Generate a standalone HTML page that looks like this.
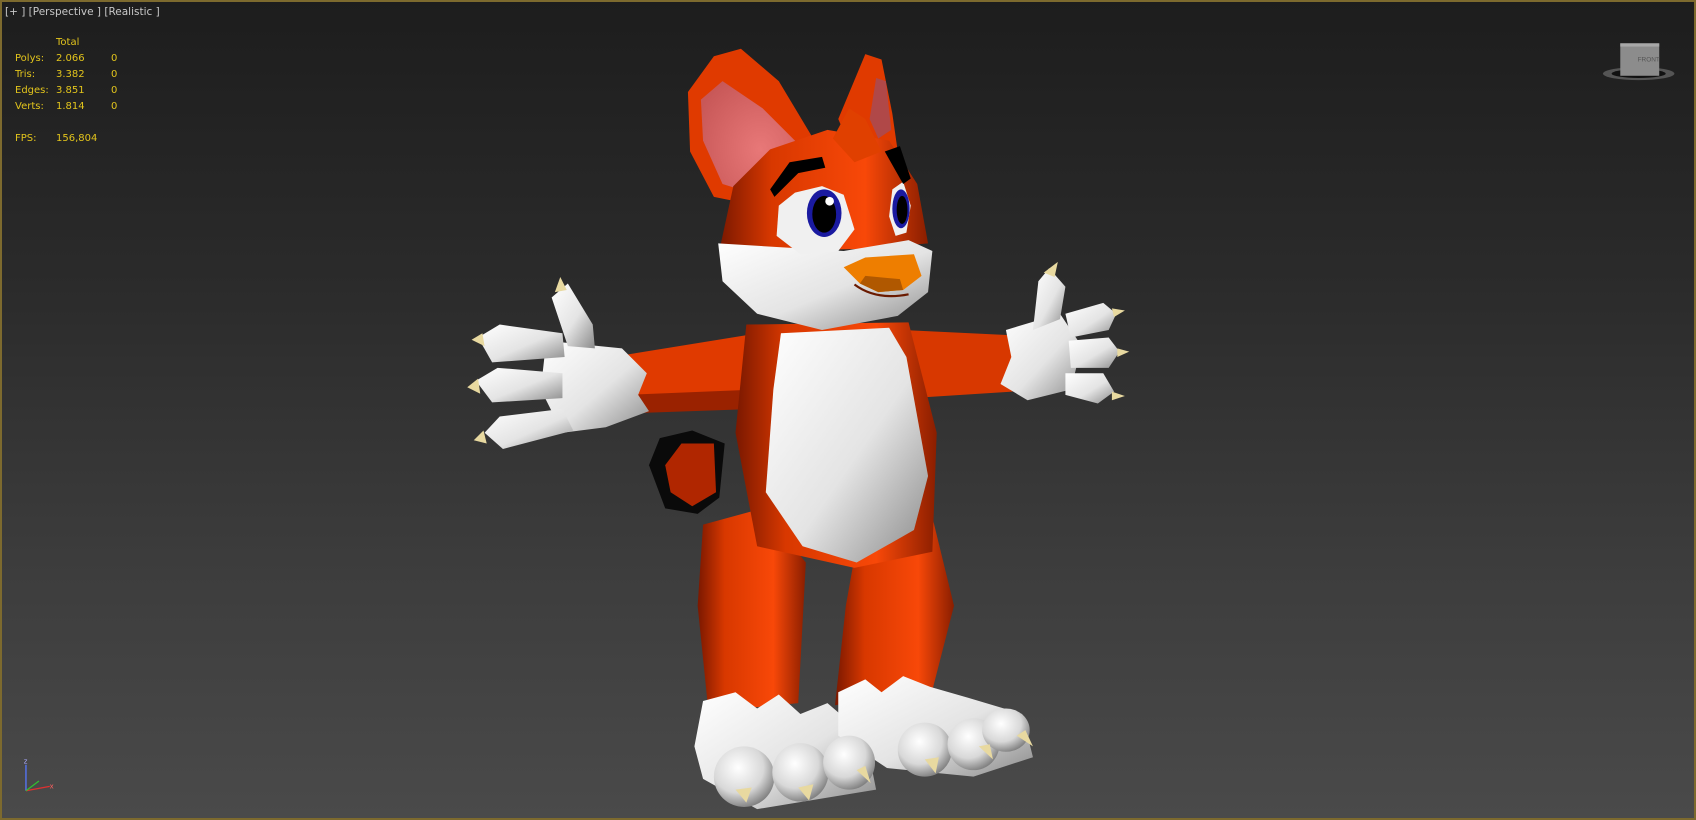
<!DOCTYPE html>
<html><head><meta charset="utf-8"><style>
html,body{margin:0;padding:0;}
body{width:1696px;height:820px;overflow:hidden;position:relative;background:linear-gradient(#1d1d1d 0%,#2b2b2b 35%,#3d3d3d 70%,#4a4a4a 100%);font-family:"DejaVu Sans","Liberation Sans",sans-serif;}
.frame{position:absolute;left:0;top:0;width:1692px;height:816px;border:2px solid #7d6a2e;}
.t{position:absolute;font-size:10px;color:#e2c41c;white-space:pre;line-height:12px;}
.h{position:absolute;left:5px;top:6px;font-size:10.5px;color:#c8c8c8;white-space:pre;}
svg{position:absolute;left:0;top:0;}
</style></head><body>
<svg width="1696" height="820" viewBox="0 0 1568 758">
<defs>
<linearGradient id="or" x1="0" y1="0" x2="1" y2="0"><stop offset="0" stop-color="#7a1800"/><stop offset="0.25" stop-color="#d83800"/><stop offset="0.7" stop-color="#f84808"/><stop offset="1" stop-color="#8a1e00"/></linearGradient>
<linearGradient id="wh" x1="0" y1="0" x2="1" y2="1"><stop offset="0" stop-color="#ffffff"/><stop offset="0.55" stop-color="#e4e4e4"/><stop offset="1" stop-color="#8a8a8a"/></linearGradient>
<radialGradient id="toe" cx="0.4" cy="0.35" r="0.7"><stop offset="0" stop-color="#fff"/><stop offset="0.6" stop-color="#d8d8d8"/><stop offset="1" stop-color="#777"/></radialGradient>
<radialGradient id="ear" cx="0.6" cy="0.6" r="0.7"><stop offset="0" stop-color="#e87878"/><stop offset="1" stop-color="#c85858"/></radialGradient>
</defs>
<!-- tail -->
<path d="M600,430 L610,405 L640,398 L670,410 L665,460 L645,475 L615,470 Z" fill="#0a0a0a"/>
<path d="M615,430 L630,410 L660,410 L662,455 L640,468 L620,455 Z" fill="#b02600"/>
<!-- legs -->
<path d="M650,485 L705,470 L745,520 L738,650 L655,658 L645,560 Z" fill="url(#or)"/>
<path d="M790,515 L860,470 L882,560 L862,638 L772,652 L782,560 Z" fill="url(#or)"/>
<!-- feet -->
<path d="M650,648 L680,640 L700,655 L720,642 L740,660 L765,650 L800,680 L810,730 L700,748 L650,720 L642,690 Z" fill="url(#wh)"/>
<path d="M775,640 L800,628 L815,640 L835,625 L860,635 L895,645 L945,660 L955,700 L900,718 L820,710 L775,680 Z" fill="url(#wh)"/>
<ellipse cx="688" cy="718" rx="28" ry="28" fill="url(#toe)"/>
<ellipse cx="740" cy="714" rx="26" ry="27" fill="url(#toe)"/>
<ellipse cx="785" cy="705" rx="24" ry="25" fill="url(#toe)"/>
<ellipse cx="855" cy="693" rx="25" ry="25" fill="url(#toe)"/>
<ellipse cx="900" cy="688" rx="24" ry="24" fill="url(#toe)"/>
<ellipse cx="930" cy="675" rx="22" ry="20" fill="url(#toe)"/>
<g fill="#e8d9a0">
<path d="M680,730 L690,742 L695,728Z"/><path d="M738,728 L748,740 L752,725Z"/><path d="M792,712 L805,724 L800,708Z"/><path d="M855,702 L865,715 L868,700Z"/><path d="M905,690 L918,702 L915,688Z"/><path d="M940,680 L955,690 L948,675Z"/>
</g>
<!-- arms -->
<path d="M578,328 L720,305 L722,372 L580,382 Z" fill="#e03a00"/>
<path d="M580,365 L700,360 L700,378 L585,382Z" fill="#9a2200"/>
<path d="M835,305 L938,310 L936,362 L842,368 Z" fill="#d83800"/>
<!-- torso -->
<path d="M690,300 L840,298 L866,400 L862,510 L790,525 L700,505 L680,400 Z" fill="url(#or)"/>
<path d="M722,308 L822,303 L838,330 L858,440 L845,490 L792,520 L742,505 L708,455 L715,360 Z" fill="url(#wh)"/>
<!-- left hand -->
<path d="M505,315 L575,322 L598,345 L590,365 L600,380 L560,395 L520,400 L500,360 Z" fill="url(#wh)"/>
<path d="M442,312 L462,300 L520,308 L522,330 L455,335 Z" fill="url(#wh)"/>
<path d="M440,352 L460,340 L520,345 L520,368 L455,372 Z" fill="url(#wh)"/>
<path d="M448,400 L462,385 L520,378 L530,398 L465,415 Z" fill="url(#wh)"/>
<path d="M510,275 L525,262 L548,300 L550,322 L525,320 Z" fill="url(#wh)"/>
<!-- right hand -->
<path d="M930,305 L980,290 L1000,320 L990,360 L950,370 L925,355 L935,330 Z" fill="url(#wh)"/>
<path d="M960,260 L970,248 L985,265 L980,295 L955,305 Z" fill="url(#wh)"/>
<path d="M985,290 L1020,280 L1032,290 L1025,305 L990,312 Z" fill="url(#wh)"/>
<path d="M988,315 L1025,312 L1035,325 L1025,340 L990,340 Z" fill="url(#wh)"/>
<path d="M985,345 L1020,345 L1030,362 L1015,373 L985,365 Z" fill="url(#wh)"/>
<g fill="#e8d9a0">
<path d="M436,314 L446,308 L448,320Z"/><path d="M432,358 L442,350 L444,364Z"/><path d="M438,407 L447,398 L450,410Z"/><path d="M513,270 L518,256 L524,268Z"/>
<path d="M965,252 L978,242 L975,256Z"/><path d="M1028,285 L1040,287 L1030,293Z"/><path d="M1033,322 L1044,325 L1033,330Z"/><path d="M1028,362 L1040,366 L1028,370Z"/>
</g>
<!-- ears -->
<path d="M636,85 L660,52 L685,45 L720,75 L750,125 L700,190 L660,182 L638,140 Z" fill="#e03a00"/>
<path d="M648,92 L668,75 L705,100 L740,135 L700,180 L668,170 L650,130 Z" fill="url(#ear)"/>
<path d="M800,50 L815,55 L825,105 L830,140 L790,145 L775,110 Z" fill="#e03a00"/>
<path d="M810,72 L819,75 L824,120 L812,128 L804,110 Z" fill="#b04848"/>
<!-- head -->
<path d="M665,232 L678,172 L712,138 L765,120 L822,130 L848,170 L858,225 L800,230 L700,232 Z" fill="url(#or)"/>
<path d="M770,128 L785,100 L800,110 L805,120 L815,140 L790,150 Z" fill="#e04000"/>
<path d="M664,225 L780,232 L840,222 L862,232 L858,270 L830,292 L760,305 L700,290 L668,260 Z" fill="url(#wh)"/>
<!-- eyes -->
<path d="M720,190 L735,178 L760,172 L780,180 L790,212 L775,232 L740,235 L718,218 Z" fill="#f0f0f0"/>
<ellipse cx="762" cy="197" rx="16" ry="22" fill="#1a1aa0"/>
<ellipse cx="762" cy="198" rx="11" ry="17" fill="#000"/>
<circle cx="767" cy="186" r="4" fill="#fff"/>
<path d="M825,175 L835,168 L842,190 L838,215 L828,218 L822,200 Z" fill="#f0f0f0"/>
<ellipse cx="833" cy="193" rx="8" ry="18" fill="#1a1aa0"/>
<ellipse cx="834" cy="194" rx="5" ry="13" fill="#000"/>
<!-- brows -->
<path d="M712,175 L730,150 L760,145 L763,155 L738,160 L716,182Z" fill="#000"/>
<path d="M818,140 L832,135 L842,165 L835,170Z" fill="#000"/>
<!-- nose -->
<path d="M780,247 L800,238 L845,235 L852,255 L835,268 L812,270 L795,262 Z" fill="#ee7e00"/>
<path d="M795,262 L812,270 L835,268 L832,258 L800,255Z" fill="#b05800"/>
<path d="M790,263 Q810,278 840,272" stroke="#6a1a00" stroke-width="2" fill="none"/>
<!-- axis gizmo -->
<g stroke-width="1.2" fill="none">
<line x1="24" y1="731" x2="24" y2="707" stroke="#5577ff"/>
<line x1="24" y1="731" x2="46" y2="727" stroke="#e03030"/>
<line x1="24" y1="731" x2="36" y2="722" stroke="#30c030"/>
</g>
<text x="22" y="706" font-size="7" fill="#aaaaff" font-family="Liberation Sans">z</text>
<text x="46" y="729" font-size="7" fill="#ff6060" font-family="Liberation Sans">x</text>
<!-- viewcube -->
<ellipse cx="1515" cy="68" rx="33" ry="6" fill="#555"/>
<ellipse cx="1515" cy="68" rx="25" ry="4" fill="#111"/>
<rect x="1498" y="40" width="36" height="30" fill="#8c8c8c"/>
<rect x="1498" y="40" width="36" height="3" fill="#a8a8a8"/>
<text x="1514" y="57" font-size="6" fill="#555" font-family="Liberation Sans">FRONT</text>
</svg>
<div class="frame"></div>
<div class="h">[+ ] [Perspective ] [Realistic ]</div>
<div class="t" style="left:56px;top:37px">Total</div>
<div class="t" style="left:15px;top:53px">Polys:</div><div class="t" style="left:56px;top:53px">2.066</div><div class="t" style="left:111px;top:53px">0</div>
<div class="t" style="left:15px;top:69px">Tris:</div><div class="t" style="left:56px;top:69px">3.382</div><div class="t" style="left:111px;top:69px">0</div>
<div class="t" style="left:15px;top:85px">Edges:</div><div class="t" style="left:56px;top:85px">3.851</div><div class="t" style="left:111px;top:85px">0</div>
<div class="t" style="left:15px;top:101px">Verts:</div><div class="t" style="left:56px;top:101px">1.814</div><div class="t" style="left:111px;top:101px">0</div>
<div class="t" style="left:15px;top:133px">FPS:</div><div class="t" style="left:56px;top:133px">156,804</div>
</body></html>
